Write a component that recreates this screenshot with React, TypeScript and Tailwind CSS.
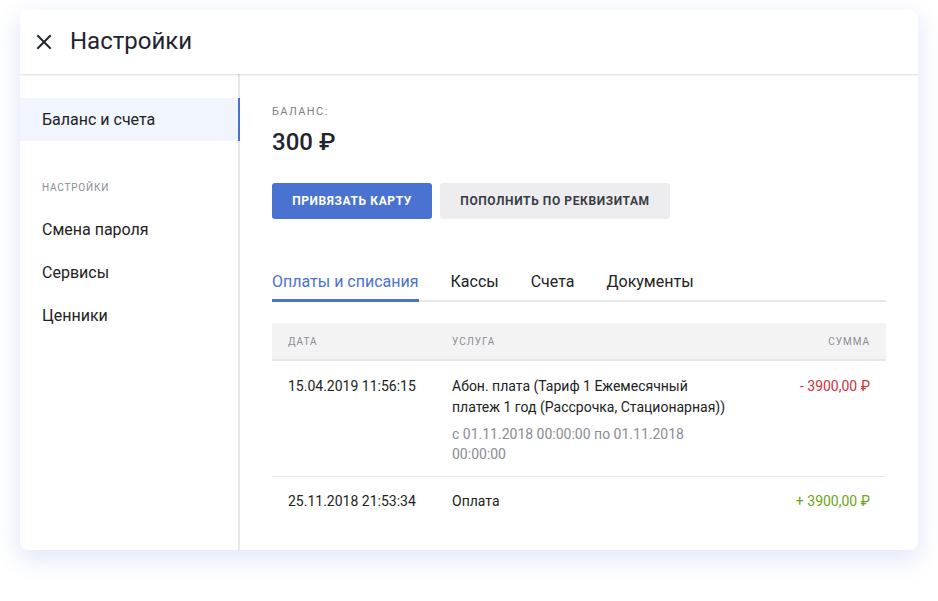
import React from 'react';

const tabs = ['Оплаты и списания', 'Кассы', 'Счета', 'Документы'];
const menu = ['Смена пароля', 'Сервисы', 'Ценники'];

export default function App() {
  return (
    <div className="w-[938px] h-[601px] bg-white pt-[10px] pl-[20px]" style={{ fontFamily: 'Roboto, "Noto Sans", sans-serif' }}>
      <div className="w-[898px] h-[540px] bg-white rounded-[8px] shadow-[0_8px_24px_rgba(70,100,220,0.18)] flex flex-col overflow-hidden">
        <div className="h-[64px] shrink-0 flex items-center pl-[15px] shadow-[0_1px_2px_rgba(0,0,0,0.14)] z-10 relative">
          <svg width="18" height="18" viewBox="0 0 18 18" className="mr-[17px]">
            <path d="M3 3L15 15M15 3L3 15" stroke="#222831" strokeWidth="2" strokeLinecap="square" />
          </svg>
          <span className="text-[24px] leading-[28px] text-[#1f2430] -mt-[2px]">Настройки</span>
        </div>
        <div className="flex flex-1 min-h-0">
          <div className="w-[220px] shrink-0 border-r-2 border-[#e6e7ea] pt-[24px]">
            <div className="h-[43px] flex items-center pl-[22px] bg-[#f0f5ff] text-[16px] text-[#222] relative -mr-[2px] border-r-2 border-[#4a72d1]">
              Баланс и счета
            </div>
            <div className="pl-[22px] mt-[39px] mb-[13px] text-[10px] tracking-[0.8px] text-[#8a8d93]">НАСТРОЙКИ</div>
            {menu.map(m => (
              <div key={m} className="h-[43px] flex items-center pl-[22px] text-[16px] text-[#222]">{m}</div>
            ))}
          </div>
          <div className="flex-1 pl-[32px] pr-[32px] pt-[31px]">
            <div className="text-[11px] tracking-[1.4px] text-[#7d8088] leading-[14px]">БАЛАНС:</div>
            <div className="text-[24px] font-medium text-[#1f2430] mt-[9px] leading-[28px]">300 ₽</div>
            <div className="flex gap-[8px] mt-[27px]">
              <button className="h-[36px] w-[160px] rounded-[3px] bg-[#4a72d1] text-white text-[12px] font-bold tracking-[0.6px]">ПРИВЯЗАТЬ КАРТУ</button>
              <button className="h-[36px] w-[230px] rounded-[3px] bg-[#ededef] text-[#3a3d44] text-[12px] font-bold tracking-[0.6px]">ПОПОЛНИТЬ ПО РЕКВИЗИТАМ</button>
            </div>
            <div className="mt-[46px] flex gap-[32px] border-b-2 border-[#e6e7ea] h-[37px]">
              {tabs.map((t, i) => (
                <div key={t} className={`text-[16px] pt-[5px] -mb-[2px] ${i === 0 ? 'text-[#4a72d1] border-b-[3px] border-[#4a72d1]' : 'text-[#222]'}`}>{t}</div>
              ))}
            </div>
            <div className="mt-[21px]">
              <div className="h-[38px] bg-[#f3f3f4] border-b-2 border-[#e6e7ea] flex items-center px-[16px] text-[10px] tracking-[1px] text-[#8a8d93]">
                <div className="w-[164px]">ДАТА</div>
                <div className="flex-1">УСЛУГА</div>
                <div>СУММА</div>
              </div>
              <div className="flex px-[16px] pt-[15px] pb-[12px] border-b border-[#e6e7ea] text-[14px] text-[#222]">
                <div className="w-[164px] leading-[21px]">15.04.2019 11:56:15</div>
                <div className="flex-1">
                  <div className="leading-[21px] w-[282px]">Абон. плата (Тариф 1 Ежемесячный платеж 1 год (Рассрочка, Стационарная))</div>
                  <div className="leading-[20px] w-[250px] mt-[6px] text-[#8a8d93]">с 01.11.2018 00:00:00 по 01.11.2018 00:00:00</div>
                </div>
                <div className="leading-[21px] text-[#d0303a]">- 3900,00 ₽</div>
              </div>
              <div className="flex px-[16px] pt-[14px] pb-[14px] text-[14px] text-[#222]">
                <div className="w-[164px] leading-[21px]">25.11.2018 21:53:34</div>
                <div className="flex-1 leading-[21px]">Оплата</div>
                <div className="leading-[21px] text-[#6aa516]">+ 3900,00 ₽</div>
              </div>
            </div>
          </div>
        </div>
      </div>
    </div>
  );
}
